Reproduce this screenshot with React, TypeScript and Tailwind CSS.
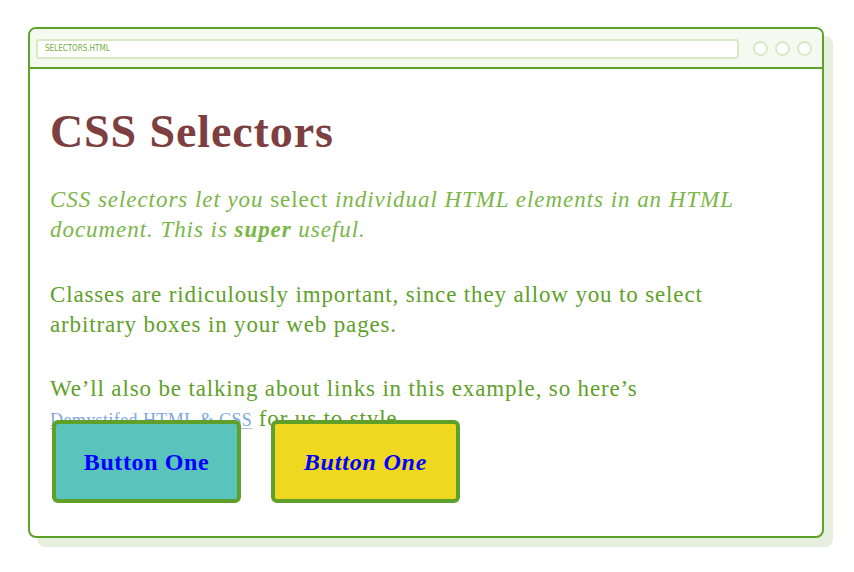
import React from "react";

export default function App() {
  const serif = { fontFamily: '"Liberation Serif", "Times New Roman", serif' };
  return (
    <div className="w-[854px] h-[572px] bg-white overflow-hidden pt-[27px] pl-[28px]" style={serif}>
      <div className="w-[796px] h-[511px] rounded-lg border-2 border-[#5fa02a] bg-white shadow-[9px_9px_0_#e7f0df] overflow-hidden flex flex-col">
        <div className="h-[40px] shrink-0 bg-[#f5faf0] border-b-2 border-[#5fa02a] flex items-center pl-[6px] pr-[10px] pt-[1px]">
          <div className="w-[704px] h-[20px] rounded-[3px] border-2 border-[#d6eac6] bg-white flex items-center pl-[7px]">
            <span className="text-[8px] leading-none text-[#6fae3c]" style={{ fontFamily: '"Liberation Sans Narrow", "DejaVu Sans Condensed", "Liberation Sans", sans-serif' }}>
              SELECTORS.HTML
            </span>
          </div>
          <div className="flex items-center gap-[7px] ml-[14px]">
            <div className="w-[15px] h-[15px] rounded-full border-2 border-[#d6eac6] bg-white" />
            <div className="w-[15px] h-[15px] rounded-full border-2 border-[#d6eac6] bg-white" />
            <div className="w-[15px] h-[15px] rounded-full border-2 border-[#d6eac6] bg-white" />
          </div>
        </div>
        <div className="pl-[20px] pt-[37px]">
          <h1 className="text-[46px] leading-[52px] font-bold tracking-[0.9px] text-[#7d3f40]">CSS Selectors</h1>
          <p className="mt-[27px] text-[23px] leading-[30px] tracking-[0.95px] text-[#7ab648] whitespace-nowrap">
            <em>CSS selectors let you</em> select <em>individual HTML elements in an HTML</em>
            <br />
            <em>document. This is </em>
            <strong><em>super</em></strong>
            <em> useful.</em>
          </p>
          <p className="mt-[35px] text-[23px] leading-[30px] tracking-[0.85px] text-[#5fa02a] whitespace-nowrap">
            Classes are ridiculously important, since they allow you to select
            <br />
            arbitrary boxes in your web pages.
          </p>
          <p className="mt-[34px] text-[23px] leading-[30px] tracking-[0.85px] text-[#5fa02a] whitespace-nowrap">
            We’ll also be talking about links in this example, so here’s
            <br />
            <a className="text-[18px] tracking-[0.4px] text-[#7fa7e2] underline decoration-[#a9c4ec] underline-offset-2">Demystifed HTML &amp; CSS</a> for us to style.
          </p>
          <div className="relative z-10 flex gap-[30px] ml-[2px] -mt-[15px]">
            <button className="w-[189px] h-[83px] rounded-md border-4 border-[#5fa02a] bg-[#5ac3bb] text-[#0000ff] text-[24px] tracking-[0.6px] font-bold">
              Button One
            </button>
            <button className="w-[189px] h-[83px] rounded-md border-4 border-[#5fa02a] bg-[#efd81f] text-[#0000ff] text-[24px] tracking-[0.8px] font-bold italic">
              Button One
            </button>
          </div>
        </div>
      </div>
    </div>
  );
}
